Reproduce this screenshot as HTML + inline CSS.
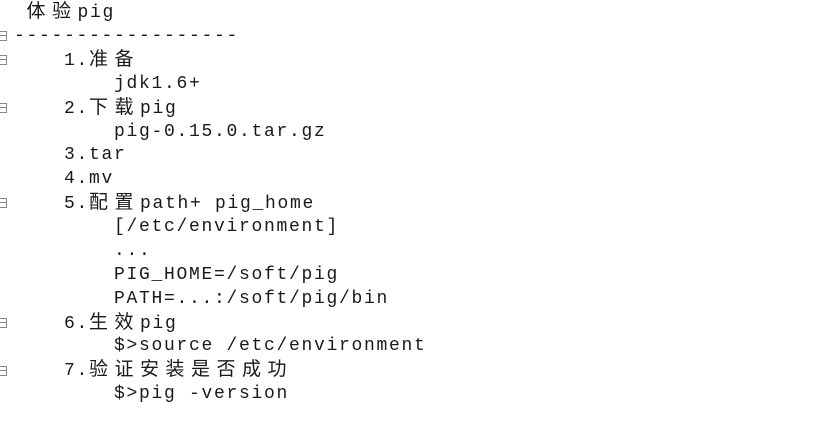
<!DOCTYPE html>
<html><head><meta charset="utf-8"><style>
html,body{margin:0;padding:0;background:#fff;width:836px;height:444px;overflow:hidden;}
.l{position:absolute;left:14px;height:24px;line-height:24px;white-space:pre;font-family:"Liberation Mono",monospace;font-size:18px;letter-spacing:1.7px;color:#1a1a1a;}
.c{font-family:"Noto Sans CJK SC","WenQuanYi Zen Hei",sans-serif;font-size:19px;letter-spacing:6.5px;line-height:1;display:inline-block;vertical-align:baseline;}
.m{position:absolute;left:-2px;width:9px;height:10px;border:1px solid #888;border-left:none;box-sizing:border-box;}
.m:after{content:"";position:absolute;left:0;right:0;top:3px;border-top:1px solid #888;}
</style></head><body>
<div class="l" style="top:0px"> <span class="c">体验</span>pig</div>
<div class="l" style="top:24px">------------------</div>
<div class="l" style="top:48px">    1.<span class="c">准备</span></div>
<div class="l" style="top:72px">        jdk1.6+</div>
<div class="l" style="top:96px">    2.<span class="c">下载</span>pig</div>
<div class="l" style="top:120px">        pig-0.15.0.tar.gz</div>
<div class="l" style="top:143px">    3.tar</div>
<div class="l" style="top:167px">    4.mv</div>
<div class="l" style="top:191px">    5.<span class="c">配置</span>path+ pig_home</div>
<div class="l" style="top:215px">        [/etc/environment]</div>
<div class="l" style="top:239px">        ...</div>
<div class="l" style="top:263px">        PIG_HOME=/soft/pig</div>
<div class="l" style="top:287px">        PATH=...:/soft/pig/bin</div>
<div class="l" style="top:311px">    6.<span class="c">生效</span>pig</div>
<div class="l" style="top:334px">        $&gt;source /etc/environment</div>
<div class="l" style="top:358px">    7.<span class="c">验证安装是否成功</span></div>
<div class="l" style="top:382px">        $&gt;pig -version</div>
<div class="m" style="top:31px"></div>
<div class="m" style="top:55px"></div>
<div class="m" style="top:103px"></div>
<div class="m" style="top:198px"></div>
<div class="m" style="top:318px"></div>
<div class="m" style="top:366px"></div>
</body></html>
